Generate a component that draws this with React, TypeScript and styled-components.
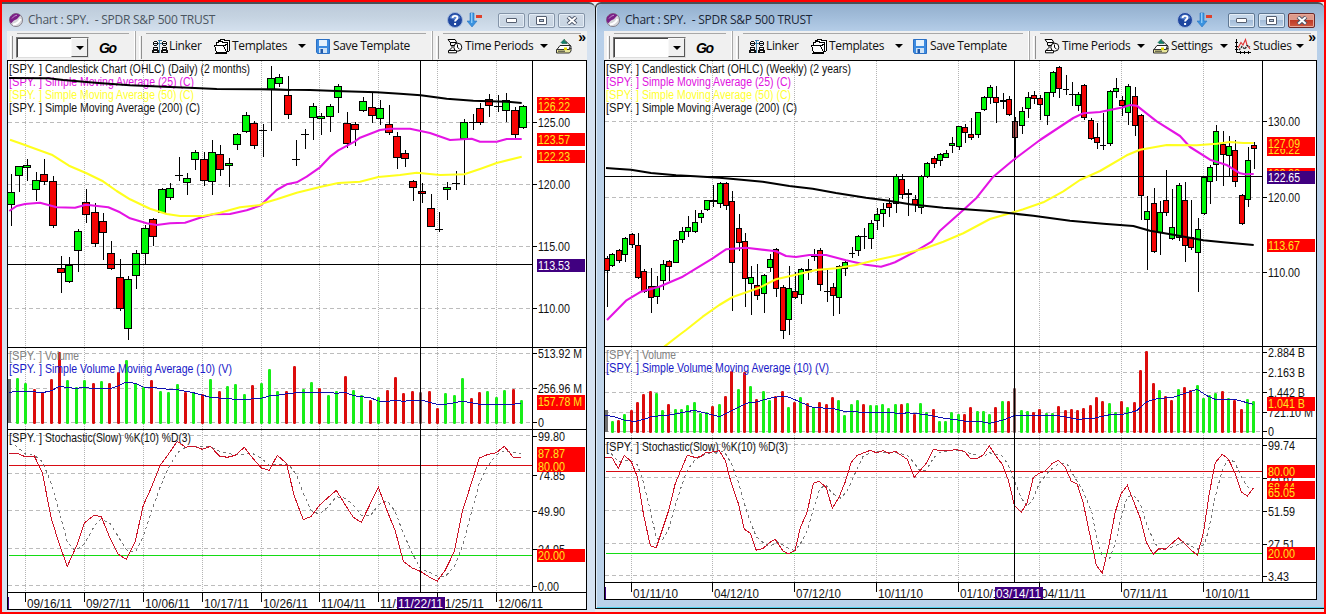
import React from 'react';
import styled, { createGlobalStyle } from 'styled-components';

const GlobalStyle = createGlobalStyle`
  * { box-sizing: border-box; }
  body { margin: 0; overflow: hidden; font-family: "Open Sans", "Noto Sans", sans-serif; }
`;

/* ---------- shell ---------- */

const Desk = styled.div`
  width: 1326px;
  height: 614px;
  display: flex;
  align-items: flex-start;
  border: 2px solid #ff0000;
  background: #e6eaee;
  overflow: hidden;
`;

const Win = styled.section<{ $active?: boolean }>`
  display: flex;
  flex-direction: column;
  flex: none;
  width: ${p => (p.$active ? 729 : 593)}px;
  height: ${p => (p.$active ? 607 : 610)}px;
  padding: ${p => (p.$active ? '0 7px 0 8px' : '0 8px 0 5px')};
  border-top: 2px solid #4a4f55;
  border-left: ${p => (p.$active ? '1px solid #111' : 'none')};
  border-bottom: ${p => (p.$active ? '1px solid #111' : 'none')};
  border-radius: ${p => (p.$active ? '6px 6px 0 0' : '0 6px 0 0')};
  background: ${p =>
    p.$active
      ? 'linear-gradient(#93afcd 0, #a3bedb 14px, #b7cfe9 29px, #c0d5ea 60%, #b9d1ea 100%)'
      : 'linear-gradient(#bccad9 0, #c6d4e2 14px, #d6e2f0 29px, #d6e3f2 100%)'};
  box-shadow: ${p => (p.$active ? 'inset 1px 0 #dcebf8, inset 0 -1px #4fd0ee' : 'none')};
`;

const TitleBar = styled.header`
  display: flex;
  align-items: center;
  height: 27px;
  flex: none;
  padding-top: 5px;
`;

const AppMark = styled.svg`
  display: block;
  margin: 0 5px 0 2px;
  flex: none;
`;

const Title = styled.h1<{ $active?: boolean }>`
  margin: 0;
  flex: 1;
  font-size: 12px;
  font-weight: 400;
  line-height: 16px;
  letter-spacing: -0.24px;
  white-space: pre;
  color: ${p => (p.$active ? '#1b2636' : '#4b5560')};
`;

const TitleIcons = styled.div`
  display: flex;
  gap: 4px;
  margin-right: 15px;
`;

const Controls = styled.div`
  display: flex;
  gap: 3px;
  margin-right: 2px;
`;

const Control = styled.button<{ $danger?: boolean; $active?: boolean }>`
  display: grid;
  place-items: center;
  width: 27px;
  height: 15px;
  padding: 0;
  border: 1px solid ${p => (p.$danger ? '#6b2a2a' : p.$active ? '#5f7893' : '#8494a8')};
  border-radius: 2px;
  box-shadow: inset 0 0 0 1px ${p => (p.$danger ? '#e8a898' : '#e4edf6')};
  background: ${p =>
    p.$danger
      ? 'linear-gradient(#dd9a8b 0 45%, #bf3a26 50%, #cf5b43)'
      : p.$active
        ? 'linear-gradient(#c5d7ea 0 45%, #a3bcd8 50%, #bcd2e8)'
        : 'linear-gradient(#cfdae6, #c6d3e1)'};
`;

/* ---------- toolbar ---------- */

const Toolbar = styled.nav`
  display: flex;
  height: 29px;
  flex: none;
  background: #f0f0f0;
`;

const Band = styled.div<{ $w: number }>`
  display: flex;
  align-items: center;
  width: ${p => p.$w}px;
  border-right: 1px solid #a8a8a8;
  box-shadow: inset -1px 0 #fff;
  &:last-child { border-right: 0; flex: 1; width: auto; box-shadow: none; }
`;

const Grip = styled.span`
  width: 3px;
  height: 23px;
  margin: 3px 0 0 3px;
  border-right: 1px solid #909090;
  border-left: 1px solid #fff;
`;

const BandBody = styled.div<{ $pad: number }>`
  display: flex;
  align-items: center;
  flex: 1;
  height: 27px;
  margin: 1px 6px 0 4px;
  padding: 0 0 1px ${p => p.$pad}px;
  border-top: 1px solid #a8a8a8;
`;

const Combo = styled.div`
  display: flex;
  justify-content: flex-end;
  width: 73px;
  height: 21px;
  margin: 3px 10px 0 -1px;
  background: #fff;
  border: 1px solid #777;
  border-right-color: #ddd;
  border-bottom-color: #ddd;
  box-shadow: inset 1px 1px #444;
`;

const ComboButton = styled.span`
  display: grid;
  place-items: center;
  width: 17px;
  height: 19px;
  background: #f0f0f0;
  border: 1px solid #f8f8f8;
  border-right-color: #555;
  border-bottom-color: #555;
`;

const Go = styled.span`
  margin-top: 3px;
  font: italic 700 14px/14px "Liberation Sans", sans-serif;
  letter-spacing: -1.5px;
  color: #000;
`;

const Tool = styled.button<{ $w?: number }>`
  display: flex;
  align-items: center;
  flex: none;
  width: ${p => (p.$w ? p.$w + 'px' : 'auto')};
  padding: 0;
  border: 0;
  background: none;
`;

const ToolLabel = styled.span<{ $w: number; $gap?: number }>`
  width: ${p => p.$w}px;
  margin-left: ${p => p.$gap ?? 2}px;
  font: 400 12px/16px "Open Sans", "Noto Sans", sans-serif;
  letter-spacing: -0.36px;
  text-align: left;
  white-space: nowrap;
  color: #111;
`;

const Caret = styled.i<{ $gap?: number }>`
  margin-left: ${p => p.$gap ?? 0}px;
  border: 4px solid transparent;
  border-top-color: #000;
  border-bottom: 0;
`;

const More = styled.span`
  align-self: flex-start;
  margin: -6px -5px 0 auto;
  font: 700 14px/19px "Liberation Sans", sans-serif;
`;

/* ---------- chart ---------- */

const ChartBox = styled.main`
  display: flex;
  flex-direction: column;
  flex: none;
  align-self: flex-start;
  border: 1px solid #000;
  background: #fff;
`;

const Pane = styled.svg`
  display: block;
  flex: none;
  box-sizing: content-box;
  border-bottom: 1px solid #000;
  font-family: "Liberation Sans", Arial, sans-serif;
  font-size: 12px;
  &:last-child { border-bottom: 0; overflow: visible; }
`;

const UP = '#00f808';
const DOWN = '#f40404';
const GREY = '#707070';

type Tone = 'G' | 'R' | 'D' | 'T' | 'X';
type Span = [number, number, string];

/* Series are stored in thirds of a pixel, relative to an origin. */
const toPoints = (spans: Span[]) =>
  spans
    .map(([ox, oy, raw]) =>
      raw
        .trim()
        .split(/\s+/)
        .map(p => {
          const [x, y] = p.split(',').map(Number);
          return `${(ox + x / 3).toFixed(1)},${(oy + y / 3).toFixed(1)}`;
        })
        .join(' '),
    )
    .join(' ');

interface Candle { x: number; hi: number; lo: number; top: number; bot: number; tone: Tone }

const toCandles = (spans: Span[]): Candle[] =>
  spans.flatMap(([ox, oy, raw]) =>
    raw.trim().split(/\s+/).map(c => {
      const tone = c.slice(-1) as Tone;
      const [x, hi, lo, top, bot] = c.slice(0, -1).split(',').map(Number);
      const fy = (v: number) => Math.floor(oy + v / 3);
      return { x: Math.floor(ox + x / 3), hi: fy(hi), lo: fy(lo), top: fy(top), bot: fy(bot ?? top), tone };
    }),
  );

const toBars = (spans: Span[]) =>
  spans.flatMap(([ox, oy, raw]) =>
    raw.trim().split(/\s+/).map(b => {
      const [x, top] = b.slice(0, -1).split(',').map(Number);
      return { x: Math.floor(ox + x / 3), top: Math.round(oy + top / 3), tone: b.slice(-1) as Tone };
    }),
  );

interface AxisLabel { y: number; t: string; w: number }
interface Tag { y: number; h: number; t: string; w?: number; kind?: 'cursor'; base?: number }
interface LegendLine { y: number; t: string; w: number; color: string }

interface ChartSpec {
  x: number;
  w: number;
  axis: number;
  cuts: [number, number, number, number];
  cross: [number, number];
  grid: number[];
  body: number;
  price: { rows: number[]; candles: Span[]; slow: Span[]; mid: Span[]; fast: Span[]; legend: LegendLine[]; labels: AxisLabel[]; tags: Tag[] };
  volume: { rows: number[]; base: number; first: [number, number]; bars: Span[]; avg: Span[]; legend: LegendLine[]; labels: AxisLabel[]; tags: Tag[] };
  stoch: { rows: number[]; hi: number; lo: number; k: Span[]; d: Span[]; legend: LegendLine[]; labels: AxisLabel[]; tags: Tag[] };
  dates: { x: number; t: string }[];
  cursorDate: { x: number; t: string };
}

const DAILY: ChartSpec = {
  x: 8, w: 578, axis: 532,
  cuts: [347, 429, 592, 609],
  cross: [420, 264],
  grid: [25, 84, 143, 202, 261, 319, 378, 437, 496],
  body: 8,
  price: {
    rows: [122, 184, 246, 308],
    candles: [
      [0, 120, `34,162,315,217,254G 57,138,213,138,166G 81,117,180,136,143G 108,156,240,181,209G 133,117,192,162,185R
        159,169,323,184,317R 184,408,516,445,458R 207,411,488,435,485G 234,327,453,334,391G 258,208,308,247,283R
        285,249,380,277,371R 309,280,419,304,338R 333,363,449,400,445R 361,417,572,472,566R 384,468,659,478,626G
        410,390,506,400,466G 435,315,433,325,401G 459,294,375,298,349R 486,204,278,208,276G 510,189,237,205,232G
        537,111,180,166D 561,159,224,174,188G 585,92,147,97,119G 613,97,195,118,182R 636,60,222,97,185G
        662,75,165,103,149R 687,114,198,129,136G 711,39,89,43,74G 738,-23,38,-14,35G 762,4,86,9,77R`],
      [260, 60, `11,192,288,211D 34,18,210,55,88G 57,42,80,52,70G 84,48,174,106,164R 110,240,315,298D 136,208,266,223D
        159,130,237,139,173G 183,160,222,169,175G 210,132,215,139,170G 234,72,158,79,112G 262,156,263,189,250R
        285,187,257,193,208R 309,111,155,124,151G 337,97,188,142,166R 361,121,194,145,175G 388,135,222,193,217R
        411,218,326,229,293R 435,271,318,280,295R 461,360,422,364,382R 487,370,426,394,401R 513,402,500,445,500R
        538,458,513,508D 562,366,417,382,388G 589,333,387,370D 613,178,372,187,236G 641,162,207,187D
        662,130,192,145,188R 688,102,168,118,136R 714,106,155,139D 739,99,185,122,152G 765,142,235,151,223R 789,136,206,139,203G`],
    ],
    slow: [[0, 0, '27,234 145,235 190,240 295,249 390,256 510,261 585,264 650,267 825,268 870,270'], [260, 60, '0,88 150,90 250,94 350,97 420,101 482,106 560,116 640,122 740,125 785,129']],
    mid: [[0, 120, '30,59 60,70 155,104 207,137 258,159 309,184 350,213 390,238 450,266 500,282 540,288 610,288 660,278 720,262 780,255'], [260, 60, '10,430 50,418 110,398 180,381 235,369 300,365 355,351 420,345 470,338 540,345 613,343 660,327 710,309 785,290']],
    fast: [[0, 120, '28,273 50,258 75,252 120,248 170,262 225,263 258,254 325,262 360,277 390,295 440,310 470,315 510,310 555,308 600,293 640,283 690,282 740,271 785,255'], [260, 60, '10,428 50,390 80,373 110,367 140,350 180,322 210,290 235,271 285,244 300,233 360,210 390,206 450,206 510,219 570,240 635,236 660,245 710,245 740,237 785,237']],
    legend: [
      { y: 73, t: 'Candlestick Chart (OHLC) (Daily) (2 months)', w: 205, color: '#111' },
      { y: 86, t: 'Simple Moving Average (25) (C)', w: 149, color: '#e010e0' },
      { y: 99, t: 'Simple Moving Average (50) (C)', w: 149, color: '#ffff30' },
      { y: 112, t: 'Simple Moving Average (200) (C)', w: 155, color: '#111' },
    ],
    labels: [{ y: 122, t: '125.00', w: 32 }, { y: 184, t: '120.00', w: 32 }, { y: 246, t: '115.00', w: 32 }, { y: 308, t: '110.00', w: 32 }],
    tags: [
      { y: 97, h: 10, t: '126.33', base: 107 },
      { y: 100, h: 13, t: '126.22', base: 111 },
      { y: 133, h: 13, t: '123.57' },
      { y: 150, h: 13, t: '122.23' },
      { y: 259, h: 13, t: '113.53', kind: 'cursor' },
    ],
  },
  volume: {
    rows: [353, 388, 422],
    base: 423,
    first: [379, 3],
    bars: [
      [0, 340, `52,117G 76,131G 103,150R 127,158R 154,120R 178,38R 202,122G 230,145G 253,122G 280,132R 304,125G 328,132R
        355,98R 379,62G 406,132G 430,145G 454,122R 481,155G 505,160G 532,134G 557,160R 580,160G 607,165R 631,119G 658,155R
        682,140G 706,135G 733,165G 757,138R 784,132G 808,90G 832,155G 859,155R 883,80R`],
      [290, 340, `40,150G 64,128G 88,146R 115,167G 139,155G 166,110R 190,153G 214,168G 241,183R 265,174G 292,152R 316,113R
        340,161R 367,155R 391,158X 418,155R 442,207R 466,161G 493,168G 517,116G 544,177R 568,158R 592,155G 619,174G 643,152G 670,149R 694,183G`],
    ],
    avg: [[0, 340, '27,158 40,155 100,155 127,158 155,152 178,138 200,143 230,145 253,142 280,146 330,146 355,138 379,126 406,130 430,141 454,142 505,148 532,149 580,158 631,172 706,178 740,178 784,175 808,168 832,166'], [290, 340, '0,160 40,157 115,157 140,160 166,157 190,167 241,173 265,183 292,184 316,181 340,184 367,181 400,181 418,187 442,193 466,193 517,184 544,188 568,193 670,193 694,189']],
    legend: [
      { y: 360, t: 'Volume', w: 34, color: '#808080' },
      { y: 373, t: 'Simple Volume Moving Average (10) (V)', w: 187, color: '#1818c8' },
    ],
    labels: [{ y: 353, t: '513.92 M', w: 44 }, { y: 388, t: '256.96 M', w: 44 }, { y: 422, t: '0', w: 6 }],
    tags: [{ y: 395, h: 15, t: '157.78 M', w: 44, base: 406 }],
  },
  stoch: {
    rows: [435, 473, 510, 548, 585],
    hi: 465, lo: 555,
    k: [[0, 340, '28,340 52,340 77,351 103,348 127,398 154,535 178,613 202,679 230,617 253,549 282,526 304,530 330,595 355,643 379,658 406,604 430,496 454,443 481,375 505,343 532,304 557,322 580,318 607,328 631,319 658,348 682,352 706,346 733,322 757,353 784,384 808,391 832,346 859,370'], [290, 340, '0,415 13,468 40,539 64,529 88,496 139,451 166,495 190,532 214,547 265,442 292,514 316,573 340,664 367,684 391,694 418,711 442,723 466,690 493,635 517,515 568,354 592,344 619,338 643,319 670,352 694,352']],
    d: [[0, 340, '45,315 77,343 103,346 127,365 154,430 178,515 202,605 225,632 253,612 285,555 304,537 330,550 355,590 379,629 406,637 430,588 454,515 481,440 505,385 532,338 557,322 580,318 631,321 658,333 706,345 757,340 784,355 808,376 859,372'], [290, 340, '0,378 20,405 40,460 64,512 88,523 115,500 139,470 166,475 190,495 214,527 241,527 265,495 292,482 316,515 340,580 367,640 391,686 418,697 442,709 466,709 493,680 517,620 568,430 592,380 619,345 643,333 694,342']],
    legend: [{ y: 442, t: 'Stochastic(Slow) %K(10) %D(3)', w: 146, color: '#111' }],
    labels: [{ y: 436, t: '99.80', w: 27 }, { y: 475, t: '74.85', w: 27 }, { y: 511, t: '49.90', w: 27 }, { y: 549, t: '24.95', w: 27 }, { y: 586, t: '0.00', w: 21 }],
    tags: [{ y: 447, h: 13, t: '87.87', w: 27 }, { y: 460, h: 12, t: '80.00', w: 27 }, { y: 549, h: 13, t: '20.00', w: 27 }],
  },
  dates: [
    { x: 27, t: '09/16/11' }, { x: 86, t: '09/27/11' }, { x: 145, t: '10/06/11' }, { x: 204, t: '10/17/11' }, { x: 263, t: '10/26/11' },
    { x: 321, t: '11/04/11' }, { x: 380, t: '11/15/11' }, { x: 439, t: '11/25/11' }, { x: 498, t: '12/06/11' },
  ],
  cursorDate: { x: 397, t: '11/22/11' },
};

const WEEKLY: ChartSpec = {
  x: 605, w: 711, axis: 1262,
  cuts: [346, 438, 582, 599],
  cross: [1014, 176],
  grid: [631, 712, 794, 876, 958, 1039, 1121, 1203],
  body: 6,
  price: {
    rows: [121, 197, 272],
    candles: [
      [596, 120, `34,408,560,416,451R 50,400,440,404,436G 69,388,426,392,422R 87,352,423,355,403G 108,340,383,343,373R
        126,340,476,377,472R 144,448,517,454,514R 166,446,578,500,532R 183,470,551,500,529G 201,421,509,433,481G
        219,420,480,424,439R 240,357,428,361,427G 258,321,368,334,358G 276,288,350,322,334G 297,270,337,307,334G
        315,271,306,280,292G 333,240,270,241,268G 352,195,258,240T 372,188,263,190,250G 390,186,269,190,256R
        408,214,570,244,427R 429,282,391,325,367R 447,339,560,364,475R 466,439,584,472,490G 484,433,537,497,526R
        505,462,578,466,520G 522,403,455,418,442G 540,385,530,388,505R 561,496,656,502,631R 579,440,642,505,598G
        597,458,536,514,532R 615,445,551,449,523G 637,418,478,447T 656,388,420,408D 672,384,512,391,493R
        694,452,544,513D 711,490,587,502,526R 730,437,581,440,532G 747,420,466,428,446G 768,382,411,400D
        786,345,407,349,391G 805,324,384,349D 825,300,384,311,355G 843,264,329,283,301G 861,249,320,268,280G 879,234,290,250,262R`],
      [890, 60, `18,342,458,348,430G 36,343,416,358,403R 55,388,465,399T 75,405,455,418,433R 93,345,461,348,442G
        111,306,352,310,348G 132,290,323,295,311R 150,280,317,283,301G 169,270,293,280,292G 186,231,276,250,257G
        207,198,269,200,260G 225,193,248,202,217R 243,174,238,223,233R 264,156,232,157,224G 282,108,152,112,149G
        300,76,129,82,112G 319,79,188,112,128R 341,99,146,122T 357,110,166,118,163R 375,172,298,185,233X
        396,142,221,154,196G 414,97,172,112,145G 432,94,129,106,115R 450,105,178,115,133R 471,96,194,97,166G
        489,33,109,38,97G 507,18,113,22,86R 529,45,103,88D 547,68,135,103D 565,96,150,103,136G 582,72,178,76,172R
        603,175,238,181,235R 621,190,266,232,248R 641,160,268,256D 660,90,257,94,250G 679,55,111,85,94G
        697,110,166,121,136R 714,73,192,79,157G 735,81,227,109,196R 753,163,479,166,406R 771,408,629,454,479G
        792,385,577,430,575R 811,424,582,457,518G 829,331,466,421,457R 847,388,537,502,536G 867,370,542,376,532G
        885,366,605,421,556R 904,420,568,532,562R 925,474,695,508,577G 942,348,462,352,460G 961,316,429,322,364G
        978,196,360,214,313G 999,213,375,252,283R 1018,228,345,260,287G 1036,240,380,271,364R 1056,402,493,406,490R
        1075,262,438,301,418G 1093,247,326,256,265R`],
    ],
    slow: [[596, 120, '30,144 60,146 105,149 165,159 240,166 297,169 370,173 420,178 500,185 580,198 650,206 720,219 810,233 880,242'], [890, 60, '0,423 60,433 160,443 300,453 430,467 540,482 640,491 730,498 780,512 850,524 940,541 1000,547 1091,555']],
    mid: [[596, 120, '205,680 250,645 270,630 320,590 370,555 410,531 460,514 490,503 540,478 600,464 660,450 720,445 780,435 830,422'], [890, 60, '0,591 60,577 110,563 160,545 220,520 300,477 360,460 400,448 460,427 520,394 570,360 630,333 710,286 750,269 830,255 920,256 980,251 1020,246 1060,249 1091,249']],
    fast: [[596, 120, '33,600 90,542 135,515 190,500 260,470 350,415 390,388 450,383 540,394 570,408 600,411 640,405 690,405 750,421 810,434 855,440'], [890, 60, '0,612 15,607 75,575 125,545 150,512 220,450 260,413 310,350 370,300 450,240 550,174 580,160 630,156 700,142 720,135 740,137 800,184 870,228 900,261 960,299 1010,315 1050,340 1065,343 1091,342']],
    legend: [
      { y: 73, t: 'Candlestick Chart (OHLC) (Weekly) (2 years)', w: 209, color: '#111' },
      { y: 86, t: 'Simple Moving Average (25) (C)', w: 149, color: '#e010e0' },
      { y: 99, t: 'Simple Moving Average (50) (C)', w: 149, color: '#ffff30' },
      { y: 112, t: 'Simple Moving Average (200) (C)', w: 155, color: '#111' },
    ],
    labels: [{ y: 121, t: '130.00', w: 32 }, { y: 197, t: '120.00', w: 32 }, { y: 272, t: '110.00', w: 32 }],
    tags: [
      { y: 143, h: 13, t: '126.22', base: 154 },
      { y: 137, h: 12, t: '127.09', base: 148 },
      { y: 168, h: 10, t: '123.23', base: 178 },
      { y: 171, h: 13, t: '122.65', kind: 'cursor' },
      { y: 239, h: 13, t: '113.67' },
    ],
  },
  volume: {
    rows: [352, 372, 392, 412, 431],
    base: 432,
    first: [410, 3],
    bars: [
      [596, 340, `49,245G 67,244R 85,224G 106,212R 124,188R 142,166R 163,155R 181,163G 199,212G 217,196R 238,209G 256,209G
        274,197G 295,190G 313,222G 331,219G 349,200R 370,194G 388,170R 406,97R 427,149G 445,100R 463,140G 481,179R 502,157G
        520,182G 538,172R 559,155R 577,203G 595,188R 613,173G 634,191R 652,204G 670,188R 691,194R 709,173R 727,184G 745,227G
        766,194G 784,184G 802,194R 823,199G 841,197G 859,194G 877,206G 898,194G 916,194R 934,191G 955,225R 973,191G 991,218G
        1012,209R 1030,245G 1048,245G 1066,218G 1087,224G 1105,224R`],
      [960, 340, `31,203R 52,215G 70,217G 88,224G 106,203R 127,187G 145,185R 163,147X 184,212G 202,217G 220,218R 238,209R
        259,222G 277,222G 295,200R 316,212R 334,209R 352,212R 370,206R 391,197R 409,173R 427,185R 448,191G 466,218G 484,185R
        502,203G 523,188R 541,92R 559,35R 580,131R 598,152G 616,170R 634,182R 655,149G 673,143R 691,154R 712,137G 730,178G
        748,167G 766,161G 787,155R 805,176G 823,182R 844,209R 862,179G 880,187G`],
    ],
    avg: [[596, 340, '28,225 60,232 90,242 120,244 145,238 165,230 220,225 295,211 330,220 370,230 400,216 450,190 480,186 520,175 560,168 580,172 610,185 652,203 709,205 745,214 802,217 880,217 916,221 934,218 991,224 1040,234'], [960, 340, '0,241 31,246 60,244 88,250 127,241 163,227 295,227 330,233 352,238 400,235 450,224 490,223 530,212 560,185 590,176 640,172 680,158 712,148 740,167 766,178 823,178 880,193']],
    legend: [
      { y: 359, t: 'Volume', w: 34, color: '#808080' },
      { y: 372, t: 'Simple Volume Moving Average (10) (V)', w: 187, color: '#1818c8' },
    ],
    labels: [{ y: 352, t: '2.884 B', w: 37 }, { y: 372, t: '2.163 B', w: 37 }, { y: 392, t: '1.442 B', w: 37 }, { y: 412, t: '721.10 M', w: 45 }, { y: 431, t: '0', w: 6 }],
    tags: [{ y: 397, h: 14, t: '1.041 B', w: 37, base: 408 }],
  },
  stoch: {
    rows: [444, 477, 510, 543, 575],
    hi: 471, lo: 553,
    k: [[596, 340, '28,352 49,354 67,385 85,346 106,365 124,410 142,520 163,617 181,623 217,515 238,430 274,346 300,353 315,349 331,336 349,336 370,332 388,362 406,430 427,490 445,568 463,580 481,631 502,625 520,608 538,598 560,632 577,642 597,632 613,563 634,515 652,430 670,424 691,443 709,505 730,470 748,425 766,367 784,346 823,331 841,338 862,332 880,340 898,334 934,358 955,412 991,370 1012,329 1048,332 1080,329'], [960, 340, '0,331 13,334 31,355 52,355 70,345 88,317 106,346 127,373 145,420 163,495 184,517 202,487 220,412 238,400 256,393 277,370 295,361 316,382 334,424 352,433 370,490 391,590 409,676 427,700 448,610 466,515 484,460 502,436 541,535 559,607 580,643 598,625 616,628 655,593 691,628 712,646 730,580 748,460 766,368 787,343 805,357 823,394 844,456 862,468 880,445']],
    d: [[596, 340, '45,340 67,365 100,360 124,374 142,425 163,510 181,595 199,600 217,570 238,495 256,440 274,390 297,360 331,340 385,335 406,370 427,425 445,490 463,545 481,590 502,608 520,620 545,605 577,625 597,632 620,600 634,570 652,510 670,450 688,433 709,460 735,475 755,450 784,385 802,348 830,335 898,338 934,345 955,370 973,394 991,390 1012,355 1030,338 1080,330'], [960, 340, '0,331 30,340 70,352 88,338 127,348 145,375 163,420 184,475 202,499 220,475 238,430 270,390 295,373 320,370 340,405 370,455 395,515 409,590 427,650 448,658 466,610 484,530 502,470 520,465 541,490 559,550 580,600 598,630 640,620 670,605 712,628 735,610 748,560 766,470 787,390 805,358 823,365 844,410 862,440 875,450']],
    legend: [{ y: 451, t: 'Stochastic(Slow) %K(10) %D(3)', w: 146, color: '#111' }],
    labels: [{ y: 445, t: '99.74', w: 27 }, { y: 478, t: '75.67', w: 27 }, { y: 511, t: '51.59', w: 27 }, { y: 544, t: '27.51', w: 27 }, { y: 576, t: '3.43', w: 21 }],
    tags: [
      { y: 465, h: 13, t: '80.00', w: 27 },
      { y: 481, h: 10, t: '68.44', w: 27, base: 492 },
      { y: 487, h: 12, t: '65.05', w: 27, base: 497 },
      { y: 547, h: 13, t: '20.00', w: 27 },
    ],
  },
  dates: [
    { x: 633, t: '01/11/10' }, { x: 714, t: '04/12/10' }, { x: 796, t: '07/12/10' }, { x: 878, t: '10/11/10' }, { x: 960, t: '01/10/11' },
    { x: 1041, t: '04/11/11' }, { x: 1123, t: '07/11/11' }, { x: 1205, t: '10/10/11' },
  ],
  cursorDate: { x: 995, t: '03/14/11' },
};

const fit = (w: number) => ({ textLength: w, lengthAdjust: 'spacingAndGlyphs' as const });

const Grid = ({ spec, rows, y, h }: { spec: ChartSpec; rows: number[]; y: number; h: number }) => (
  <g stroke="#bcbcbc" shapeRendering="crispEdges">
    {spec.grid.map(x => <line key={x} x1={x + 0.5} x2={x + 0.5} y1={y} y2={y + h} strokeDasharray="1 1" stroke="#b4b4b4" />)}
    {rows.map(r => <line key={r} x1={spec.x} x2={spec.axis} y1={r + 0.5} y2={r + 0.5} strokeDasharray="4 3" />)}
  </g>
);

const Legend = ({ x, lines }: { x: number; lines: LegendLine[] }) => (
  <g>
    {lines.map(l => (
      <g key={l.y} fill={l.color}>
        <text x={x + 1} y={l.y} {...fit(33)}>{'[SPY.\u00a0]'}</text>
        <text x={x + 37} y={l.y} {...fit(l.w)}>{l.t}</text>
      </g>
    ))}
  </g>
);

const Axis = ({ spec, labels, tags, y, h }: { spec: ChartSpec; labels: AxisLabel[]; tags: Tag[]; y: number; h: number }) => (
  <g>
    <rect x={spec.axis} y={y} width="1" height={h} />
    {labels.map(l => (
      <g key={l.t}>
        <rect x={spec.axis} y={l.y} width="5" height="1" />
        <text x={spec.axis + 6} y={l.y + 5.4} fill="#111" {...fit(l.w)}>{l.t}</text>
      </g>
    ))}
    {tags.map(t => (
      <g key={t.y}>
        <rect x={spec.axis + 5} y={t.y} width="48" height={t.h} fill={t.kind ? '#400080' : '#ff0000'} />
        <text x={spec.axis + 6} y={t.base ?? t.y + 11} fill={t.kind ? '#fff' : '#ffe81e'} {...fit(t.w ?? 32)}>{t.t}</text>
      </g>
    ))}
  </g>
);

const Cross = ({ spec, y, h, row }: { spec: ChartSpec; y: number; h: number; row?: boolean }) => (
  <g>
    <rect x={spec.cross[0]} y={y} width="1" height={h} />
    {row && <rect x={spec.x} y={spec.cross[1]} width={spec.axis - spec.x} height="1" />}
  </g>
);

const toneFill = (t: Tone) => (t === 'G' ? UP : t === 'X' ? '#a04848' : DOWN);

const PricePane = ({ spec }: { spec: ChartSpec }) => {
  const y = 61;
  const h = spec.cuts[0] - y;
  const p = spec.price;
  const half = spec.body / 2;
  return (
    <Pane width={spec.w} height={h} viewBox={`${spec.x} ${y} ${spec.w} ${h}`}>
      <Grid spec={spec} rows={p.rows} y={y} h={h} />
      <Legend x={spec.x} lines={p.legend} />
      <g shapeRendering="crispEdges">
        {toCandles(p.candles).map(c => (
          <g key={c.x}>
            <rect x={c.x} y={c.hi} width="1" height={c.lo - c.hi + 1} />
            {c.tone === 'D' || c.tone === 'T' ? (
              <rect x={c.x - half} y={c.top} width={spec.body + (c.tone === 'D' ? 0 : 1)} height={c.tone === 'T' ? 2 : 1} />
            ) : (
              <rect x={c.x - half + 0.5} y={c.top + 0.5} width={spec.body - 1} height={Math.max(2, c.bot - c.top)} fill={toneFill(c.tone)} stroke="#000" />
            )}
          </g>
        ))}
      </g>
      <Cross spec={spec} y={y} h={h} row />
      <g fill="none" strokeWidth="2.1" strokeLinejoin="round">
        <polyline points={toPoints(p.fast)} stroke="#e414e4" />
        <polyline points={toPoints(p.mid)} stroke="#ffff1e" />
        <polyline points={toPoints(p.slow)} stroke="#000" />
      </g>
      <Axis spec={spec} labels={p.labels} tags={p.tags} y={y} h={h} />
    </Pane>
  );
};

const VolumePane = ({ spec }: { spec: ChartSpec }) => {
  const y = spec.cuts[0] + 1;
  const h = spec.cuts[1] - y;
  const v = spec.volume;
  return (
    <Pane width={spec.w} height={h} viewBox={`${spec.x} ${y} ${spec.w} ${h}`}>
      <Grid spec={spec} rows={v.rows} y={y} h={h} />
      <rect x={spec.x} y={v.first[0]} width={v.first[1]} height={v.base - v.first[0]} fill={GREY} />
      {toBars(v.bars).map(b => (
        <rect key={b.x} x={b.x - 1} y={b.top - 1} width="3" height={v.base - b.top + 2} rx="1.2"
          fill={b.tone === 'G' ? '#18ee18' : b.tone === 'X' ? '#8a6060' : '#dc0c0c'} />
      ))}
      <Legend x={spec.x} lines={v.legend} />
      <polyline points={toPoints(v.avg)} fill="none" stroke="#1010b0" shapeRendering="crispEdges" />
      <Cross spec={spec} y={y} h={h} />
      <Axis spec={spec} labels={v.labels} tags={v.tags} y={y} h={h} />
    </Pane>
  );
};

const StochPane = ({ spec }: { spec: ChartSpec }) => {
  const y = spec.cuts[1] + 1;
  const h = spec.cuts[2] - y;
  const s = spec.stoch;
  return (
    <Pane width={spec.w} height={h} viewBox={`${spec.x} ${y} ${spec.w} ${h}`}>
      <Grid spec={spec} rows={s.rows} y={y} h={h} />
      <Legend x={spec.x} lines={s.legend} />
      <g shapeRendering="crispEdges">
        <line x1={spec.x + 1} x2={spec.axis} y1={s.hi + 0.5} y2={s.hi + 0.5} stroke="#d80c14" />
        <line x1={spec.x + 1} x2={spec.axis} y1={s.lo + 0.5} y2={s.lo + 0.5} stroke="#14dc14" />
      </g>
      <g fill="none" shapeRendering="crispEdges">
        <polyline points={toPoints(s.d)} stroke="#777" strokeDasharray="3 3" />
        <polyline points={toPoints(s.k)} stroke="#cc1428" />
      </g>
      <Cross spec={spec} y={y} h={h} />
      <Axis spec={spec} labels={s.labels} tags={s.tags} y={y} h={h} />
    </Pane>
  );
};

const DatePane = ({ spec }: { spec: ChartSpec }) => {
  const y = spec.cuts[2] + 1;
  const h = spec.cuts[3] - y;
  return (
    <Pane width={spec.w} height={h} viewBox={`${spec.x} ${y} ${spec.w} ${h}`}>
      <rect x={spec.x} y={y + 4} width="1" height={h - 4} fill="#400080" />
      {spec.grid.map(x => <rect key={x} x={x} y={y} width="1" height="9" />)}
      {spec.dates.map(d => <text key={d.x} x={d.x} y={y + 15} fill="#111" {...fit(45)}>{d.t}</text>)}
      <rect x={spec.cursorDate.x} y={y + 4} width="48" height="12" fill="#400080" />
      <text x={spec.cursorDate.x + 1} y={y + 15} fill="#fff" {...fit(45)}>{spec.cursorDate.t}</text>
    </Pane>
  );
};

const Chart = ({ spec }: { spec: ChartSpec }) => (
  <ChartBox>
    <PricePane spec={spec} />
    <VolumePane spec={spec} />
    <StochPane spec={spec} />
    <DatePane spec={spec} />
  </ChartBox>
);

/* ---------- icons ---------- */

const LogoIcon = () => (
  <AppMark width="14" height="14" viewBox="0 0 14 14">
    <circle cx="7" cy="7" r="6.6" fill="#d6d6da" stroke="#77727c" strokeWidth="0.8" />
    <path d="M1 9A6.3 6.3 0 0 1 11.5 2.6C9.5 3.8 9 6 6.5 6.8 4 7.5 3.5 9.5 2 10.5Z" fill="#7a1f86" />
    <path d="M3 5.5Q5 2.5 8 2.2" stroke="#c58fd0" fill="none" />
    <path d="M4 11.5Q9 11 11.5 6" stroke="#fff" strokeWidth="2" fill="none" />
  </AppMark>
);

const HelpIcon = () => (
  <svg width="16" height="16" viewBox="0 0 16 16">
    <circle cx="8" cy="8" r="7.5" fill="#1f479f" stroke="#9fb6dc" />
    <path d="M2.5 6A6 6 0 0 1 13.5 6Q8 9 2.5 6Z" fill="#5b84cf" />
    <path d="M5.6 6.1C5.6 3 10.6 3.2 10.4 5.9 10.3 7.5 8.1 7.6 8.1 9.6" stroke="#fff" strokeWidth="1.9" fill="none" />
    <rect x="7.1" y="11" width="2" height="2" fill="#fff" />
  </svg>
);

const SortIcon = () => (
  <svg width="16" height="16" viewBox="0 0 16 16">
    <path d="M3 1H7V9H10L5 15 0 9H3Z" fill="#3a93e0" stroke="#2a72c0" strokeWidth="0.6" />
    <rect x="4" y="1" width="1.4" height="10" fill="#8ccaf8" />
    <rect x="9" y="3" width="6" height="3" fill="#e0402a" />
  </svg>
);

const MinGlyph = () => (
  <svg width="11" height="5" viewBox="0 0 11 5"><rect x="0.5" y="0.5" width="10" height="4" rx="0.5" fill="#fff" stroke="#555f70" /></svg>
);
const MaxGlyph = () => (
  <svg width="11" height="9" viewBox="0 0 11 9">
    <rect x="0.5" y="0.5" width="10" height="8" rx="0.5" fill="#fff" stroke="#555f70" />
    <rect x="3.5" y="3.5" width="4" height="2" fill="#b4c6da" stroke="#555f70" />
  </svg>
);
const CloseGlyph = () => (
  <svg width="12" height="9" viewBox="0 0 12 9">
    <path d="M2 1L10 8M10 1L2 8" stroke="#4c566a" strokeWidth="4" />
    <path d="M2.3 1.3L9.7 7.7M9.7 1.3L2.3 7.7" stroke="#fff" strokeWidth="2.1" />
  </svg>
);

const LinkerIcon = () => (
  <svg width="16" height="15" viewBox="0 0 16 15" shapeRendering="crispEdges">
    <path d="M7.5 1V14M6 1.5H10M3 4.5H12" stroke="#3c7ea8" fill="none" />
    {[0, 9].map(x => (
      <g key={x}>
        <path d={`M${x + 1} 3H${x + 2}V2H${x + 5}V3H${x + 6}V6H${x + 5}V7H${x + 2}V6H${x + 1}Z`} fill="#111" />
        <rect x={x + 2} y="3" width="3" height="1" fill="#fff" />
        <rect x={x + 2} y="5" width="3" height="1" fill="#d8e8f0" />
        <rect x={x + 1} y="8" width="5" height="6" fill="#111" />
        <rect x={x + 2} y="9" width="3" height="1" fill="#fff" />
        <rect x={x} y="11" width="7" height="3" fill="#111" />
        <rect x={x + 2} y="12" width="3" height="1" fill="#fff" />
      </g>
    ))}
  </svg>
);

const TemplatesIcon = () => (
  <svg width="16" height="15" viewBox="0 0 16 15" shapeRendering="crispEdges">
    <path d="M4.5 5V1.5H6.5V.5H10.5V1.5H15.5V11.5L13.5 13" fill="#fff" stroke="#000" />
    <path d="M2.5 7V3.5H4.5V2.5H8.5V3.5H13.5V13" fill="#fff" stroke="#000" />
    <path d="M.5 6.5H9.5L12.5 13.5H2.5Z" fill="#fff" stroke="#000" />
    <path d="M9.5 6.5L13.5 5.5M1 14.5H13" stroke="#000" />
  </svg>
);

const SaveIcon = () => (
  <svg width="14" height="15" viewBox="0 0 14 15">
    <path d="M.5 .5H13.5V14.5H1.5L.5 13Z" fill="#3c8be0" stroke="#2a6fc4" />
    <rect x="3" y="1" width="8" height="6" fill="#e6f2fc" />
    <rect x="3" y="9" width="8" height="5" fill="#cfe3f6" />
    <rect x="4.5" y="10" width="2.5" height="4" fill="#2058a8" />
  </svg>
);

const TimeIcon = () => (
  <svg width="16" height="16" viewBox="0 0 16 16">
    <path d="M1 1.5H8L9.8 4.5H3.2ZM3.5 4.5V7L5.5 9 2.5 12M8.5 4.5L9.5 8" fill="#fff" stroke="#000" />
    <path d="M1.5 12.5H9.5V14.8H1.5Z" fill="#fff" stroke="#000" />
    <circle cx="10.8" cy="9.2" r="4" fill="#fff" stroke="#000" />
    <path d="M10.5 6.5V9.5L12.5 11M4 7.5H7" stroke="#000" fill="none" />
  </svg>
);

const SettingsIcon = () => (
  <svg width="16" height="16" viewBox="0 0 16 16">
    <path d="M5 4.5L8.5 1V3L11 4.5V5.5H6Z" fill="#10806c" stroke="#053" strokeWidth="0.5" />
    <path d="M9 2.5L15 8V11" stroke="#444" fill="none" />
    <path d="M4 7.5H14.5L13 11.5H1Z" fill="#fff" stroke="#222" />
    <path d="M.5 11.5H13.5L15 10V13L13.5 15H.5Z" fill="#e9e79a" stroke="#333" />
    <path d="M8 9.5H11V12H8Z" fill="#e6d800" />
    <path d="M2 13.2H9" stroke="#333" />
  </svg>
);

const StudiesIcon = () => (
  <svg width="16" height="16" viewBox="0 0 16 16">
    <path d="M1.5 1V14.5H16M0 4.5H3M0 8.5H3M0 11.5H3M5.5 13V16M9.5 13V16M13.5 13V16" stroke="#000" fill="none" />
    <path d="M3 10L6 4.5 8 7 10.5 1.5 12 7 15 11" stroke="#e03030" fill="none" strokeWidth="1.1" />
    <path d="M4 12L7 8.5 10 11 12 7.5 15 9" stroke="#222" fill="none" strokeDasharray="2 1" strokeWidth="1.3" />
  </svg>
);

/* ---------- windows ---------- */

const ChartWindow = ({ spec, active }: { spec: ChartSpec; active?: boolean }) => (
  <Win $active={active}>
    <TitleBar>
      <LogoIcon />
      <Title $active={active}>{'Chart : SPY.  - SPDR S&P 500 TRUST'}</Title>
      <TitleIcons><HelpIcon /><SortIcon /></TitleIcons>
      <Controls>
        <Control $active={active} aria-label="Minimize"><MinGlyph /></Control>
        <Control $active={active} aria-label="Maximize"><MaxGlyph /></Control>
        <Control $active={active} $danger={active} aria-label="Close"><CloseGlyph /></Control>
      </Controls>
    </TitleBar>
    <Toolbar>
      <Band $w={129}>
        <Grip />
        <BandBody $pad={0}>
          <Combo><ComboButton><Caret /></ComboButton></Combo>
          <Go>Go</Go>
        </BandBody>
      </Band>
      <Band $w={297}>
        <Grip />
        <BandBody $pad={6}>
          <Tool $w={62}><LinkerIcon /><ToolLabel $w={36} $gap={1}>Linker</ToolLabel></Tool>
          <Tool $w={102}><TemplatesIcon /><ToolLabel $w={58}>Templates</ToolLabel><Caret $gap={8} /></Tool>
          <Tool><SaveIcon /><ToolLabel $w={84} $gap={3}>Save Template</ToolLabel></Tool>
        </BandBody>
      </Band>
      <Band $w={100}>
        <Grip />
        <BandBody $pad={4}>
          <Tool $w={109}><TimeIcon /><ToolLabel $w={72}>Time Periods</ToolLabel><Caret $gap={3} /></Tool>
          <Tool $w={active ? 82 : 16}>
            <SettingsIcon />
            {active && <><ToolLabel $w={46}>Settings</ToolLabel><Caret $gap={3} /></>}
          </Tool>
          {active && <Tool><StudiesIcon /><ToolLabel $w={42}>Studies</ToolLabel><Caret $gap={1} /></Tool>}
          <More>»</More>
        </BandBody>
      </Band>
    </Toolbar>
    <Chart spec={spec} />
  </Win>
);

export default function App() {
  return (
    <>
      <GlobalStyle />
      <Desk>
        <ChartWindow spec={DAILY} />
        <ChartWindow spec={WEEKLY} active />
      </Desk>
    </>
  );
}
